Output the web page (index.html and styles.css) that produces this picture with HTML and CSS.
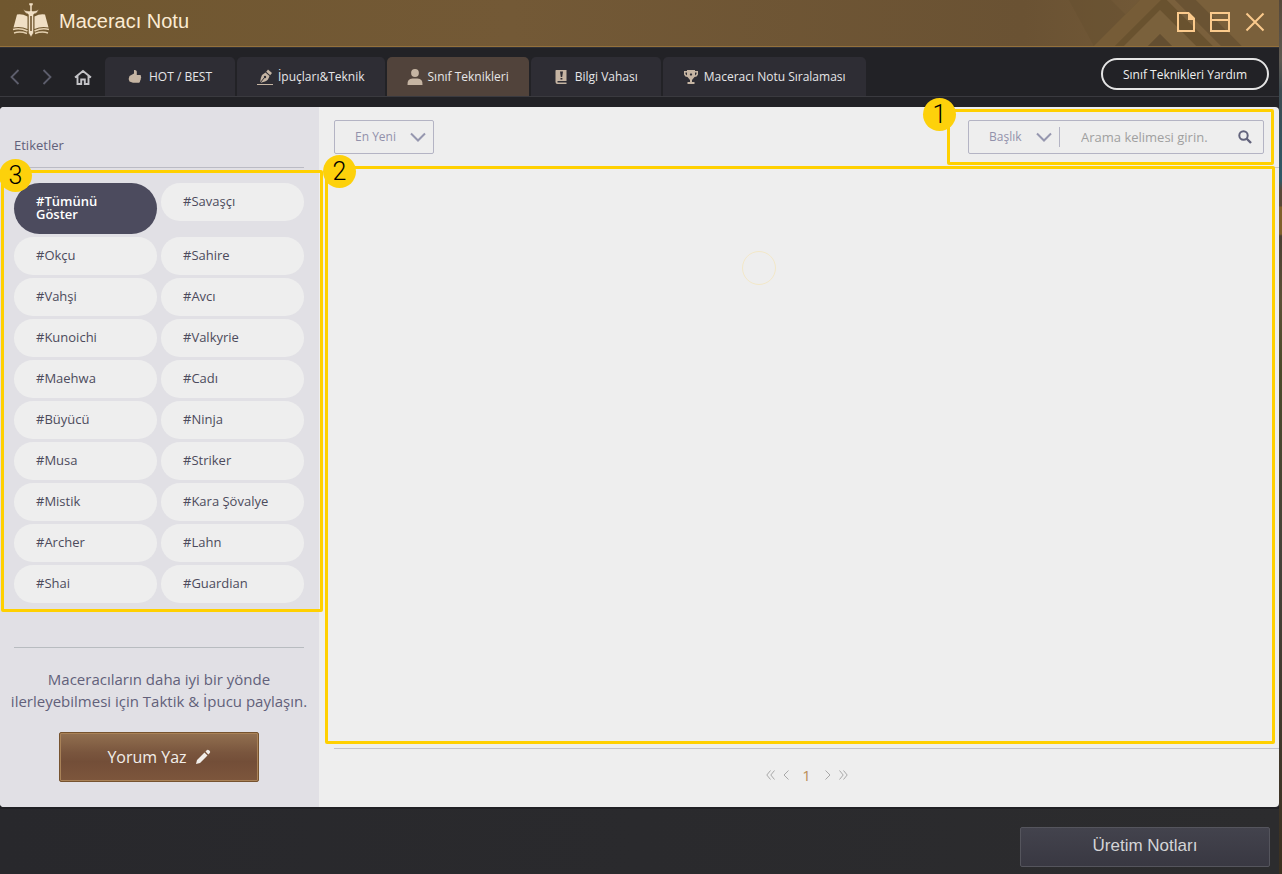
FILE: index.html
```html
<!DOCTYPE html>
<html lang="tr">
<head>
<meta charset="utf-8">
<meta name="viewport" content="width=device-width, initial-scale=1">
<title>Maceracı Notu</title>
<link rel="stylesheet" href="styles.css">
</head>
<body>
<div class="window">
  <header class="titlebar">
    <svg class="titlebar-pattern" width="240" height="46" viewBox="0 0 240 46" aria-hidden="true">
      <path d="M30 0H72L88 16L101 0L55 46z" fill="#65502f" opacity=".5"/>
      <path d="M101 0H122L76 46H55z" fill="#765c37"/>
      <path d="M122 0H128L174 46H157L121 10L85 46H76z" fill="#69522f"/>
      <path d="M121 10L157 46H133L121 34L109 46H85z" fill="#7a613c"/>
      <path d="M121 34L133 46H109z" fill="#634e31"/>
      <path d="M128 0H136L182 46H174z" fill="#7a603c"/>
      <path d="M136 0H157L203 46H182z" fill="#6a5333"/>
      <path d="M157 0H240V46H203z" fill="#7a603b"/>
    </svg>
    <svg class="logo" width="38" height="36" viewBox="0 0 38 36" aria-hidden="true">
      <g fill="#f0dfc5">
        <path d="M5 12.500Q10 11.500 15.500 14.500V27Q9 24 1.500 25.500z"/>
        <path d="M33 12.500Q28 11.500 22.500 14.500V27Q29 24 36.500 25.500z"/>
        <path d="M17 1h4v2.500h-1v5.500h2q2 0 4.500-1.500-1 4-4.500 4.500l-.5 1v18l-2.500 4-2.500-4V13l-.5-1Q13 11.500 11.500 7.500q2.500 1.500 4.500 1.500h2V3.500h-1z" stroke="#71562f" stroke-width=".5"/>
      </g>
      <path d="M19 14v15" stroke="#71562f" stroke-width="1.600" fill="none"/>
      <path d="M1 27.500q7-2 14.500 1.500M2 31q6-2 13 .5M37 27.500q-7-2-14.500 1.500M36 31q-6-2-13 .5" fill="none" stroke="#e4d0b0" stroke-width="1.500"/>
    </svg>
    <h1 class="title">Maceracı Notu</h1>
    <div class="window-controls">
      <button type="button" aria-label="Yeni not">
        <svg width="18" height="20" viewBox="0 0 18 20"><path d="M1 1h10.500L17 6.500V19H1z" fill="none" stroke="#fbca8c" stroke-width="2"/><path d="M11 1v7h7z" fill="#fbca8c"/></svg>
      </button>
      <button type="button" aria-label="Pencere">
        <svg width="20" height="20" viewBox="0 0 20 20"><path d="M1 1h18v18H1zM1 8h18" fill="none" stroke="#fbca8c" stroke-width="2"/></svg>
      </button>
      <button type="button" aria-label="Kapat">
        <svg width="20" height="20" viewBox="0 0 20 20"><path d="M1.500 1.500l17 17M18.500 1.500l-17 17" fill="none" stroke="#fbca8c" stroke-width="2"/></svg>
      </button>
    </div>
  </header>

  <nav class="nav">
    <div class="history">
      <button type="button" aria-label="Geri"><svg width="10" height="16" viewBox="0 0 10 16"><path d="M8.500 1L1.500 8l7 7" fill="none" stroke="#5d5e6c" stroke-width="1.800"/></svg></button>
      <button type="button" aria-label="İleri"><svg width="10" height="16" viewBox="0 0 10 16"><path d="M1.500 1l7 7-7 7" fill="none" stroke="#5d5e6c" stroke-width="1.800"/></svg></button>
      <button type="button" aria-label="Ana sayfa"><svg width="18" height="16" viewBox="0 0 18 16"><path d="M1 8.500L9 2l8 6.500M3.500 7v8h3.700v-4.500h3.600V15h3.700V7" fill="none" stroke="#c3c3c7" stroke-width="1.900"/></svg></button>
    </div>
    <div class="tabs">
      <a class="tab" href="#hot">
        <svg width="16" height="16" viewBox="0 0 16 16"><path d="M1.500 7L6 4.500V1Q8.500.5 8.800 2.500V6h3.500q1.200.5.600 1.800.8 1-.2 2 .4 1.200-.6 2 0 1.800-1.200 2H5L1.500 12.500q-1.500-3 0-5.500z" fill="#c6b5a3"/></svg>
        HOT / BEST</a>
      <a class="tab" href="#tips">
        <svg width="16" height="16" viewBox="0 0 16 16"><path d="M11 .5L15 4l-1.800 2.200L9.200 2.700z" fill="#c6b5a3"/><path d="M8.500 3.500l4 3.500q-1.300 4.500-4.500 5.500L3 14Q3.500 8.500 5 6z" fill="#c6b5a3"/><path d="M3 14l4.500-5.500" stroke="#2e2d34"/><circle cx="8" cy="8" r="1.200" fill="#2e2d34"/><path d="M0 15.500h16" stroke="#c6b5a3"/></svg>
        İpuçları&amp;Teknik</a>
      <a class="tab active" href="#class" aria-current="page">
        <svg width="16" height="16" viewBox="0 0 16 16"><circle cx="8" cy="4" r="3.900" fill="#c6b5a3"/><path d="M.5 16q-.5-6.500 5-6.500h5q5.500 0 5 6.500z" fill="#c6b5a3"/></svg>
        Sınıf Teknikleri</a>
      <a class="tab" href="#oasis">
        <svg width="16" height="16" viewBox="0 0 16 16"><path d="M2 1h10.500v11H3.500v1.500h9V15H3.500Q1.500 15 1.500 13V1.500z" fill="#c6b5a3"/><path d="M6 2.500h3L8.200 8H6.800zM6.500 9h1.900v1.600H6.500z" fill="#2e2d34"/></svg>
        Bilgi Vahası</a>
      <a class="tab" href="#ranking">
        <svg width="16" height="16" viewBox="0 0 16 16"><path d="M4 1h8v1h3v3.500Q14 8 11.500 8L9 11v2h2.500v2h-7v-2H7v-2L4.500 8Q2 8 1 5.500V2h3zM2.500 3.500V5L4 6.500v-3zM13.500 3.500H12v3L13.500 5zM6.700 5.500L8 7l1.300-1.500L8 4z" fill="#c6b5a3" fill-rule="evenodd"/></svg>
        Maceracı Notu Sıralaması</a>
    </div>
    <button type="button" class="help">Sınıf Teknikleri Yardım</button>
  </nav>

  <main class="main">
    <aside class="sidebar">
      <h2 class="sidebar-title">Etiketler</h2>
      <div class="tags">
        <button type="button" class="tag selected">#Tümünü Göster</button>
        <button type="button" class="tag">#Savaşçı</button>
        <button type="button" class="tag">#Okçu</button>
        <button type="button" class="tag">#Sahire</button>
        <button type="button" class="tag">#Vahşi</button>
        <button type="button" class="tag">#Avcı</button>
        <button type="button" class="tag">#Kunoichi</button>
        <button type="button" class="tag">#Valkyrie</button>
        <button type="button" class="tag">#Maehwa</button>
        <button type="button" class="tag">#Cadı</button>
        <button type="button" class="tag">#Büyücü</button>
        <button type="button" class="tag">#Ninja</button>
        <button type="button" class="tag">#Musa</button>
        <button type="button" class="tag">#Striker</button>
        <button type="button" class="tag">#Mistik</button>
        <button type="button" class="tag">#Kara Şövalye</button>
        <button type="button" class="tag">#Archer</button>
        <button type="button" class="tag">#Lahn</button>
        <button type="button" class="tag">#Shai</button>
        <button type="button" class="tag">#Guardian</button>
        <div class="callout callout-tags"><span class="badge">3</span></div>
      </div>
      <div class="share">
        <p>Maceracıların daha iyi bir yönde<br>ilerleyebilmesi için Taktik &amp; İpucu paylaşın.</p>
        <button type="button" class="write">Yorum Yaz
          <svg width="16" height="16" viewBox="0 0 16 16" aria-hidden="true"><path d="M1 15l1-4L9.500 3.500l3 3L5 14zM10.500 2.500L12 1q1-.6 2 .3l.8.8q.8.900 0 1.900l-1.500 1.500z" fill="#f2eeea"/></svg>
        </button>
      </div>
    </aside>

    <section class="content">
      <div class="toolbar">
        <div class="select sort">
          <select aria-label="Sıralama"><option>En Yeni</option></select>
          <svg class="chevron" width="16" height="10" viewBox="0 0 16 10" aria-hidden="true"><path d="M1 1.500l7 7 7-7" fill="none" stroke="#9697af" stroke-width="2"/></svg>
        </div>
        <form class="search">
          <div class="select field">
            <select aria-label="Arama alanı"><option>Başlık</option></select>
            <svg class="chevron" width="16" height="10" viewBox="0 0 16 10" aria-hidden="true"><path d="M1 1.500l7 7 7-7" fill="none" stroke="#9697af" stroke-width="2"/></svg>
          </div>
          <input type="text" aria-label="Arama" placeholder="Arama kelimesi girin.">
          <button type="button" aria-label="Ara"><svg width="14" height="14" viewBox="0 0 14 14"><circle cx="5.500" cy="5.500" r="4.200" fill="none" stroke="#62637c" stroke-width="2"/><path d="M8.500 8.500l4.500 4.500" stroke="#62637c" stroke-width="2.400"/></svg></button>
          <div class="callout callout-search"><span class="badge">1</span></div>
        </form>
      </div>
      <div class="posts">
        <div class="spinner" role="status" aria-label="Yükleniyor"></div>
        <div class="callout callout-posts"><span class="badge">2</span></div>
      </div>
      <div class="pagination">
        <button type="button" aria-label="İlk sayfa"><svg width="9" height="10" viewBox="0 0 9 10"><path d="M4.500 .5L.8 5l3.700 4.500M8.500 .5L4.800 5l3.700 4.500"/></svg></button>
        <button type="button" aria-label="Önceki sayfa"><svg width="6" height="10" viewBox="0 0 6 10"><path d="M5.500 .5L1 5l4.500 4.500"/></svg></button>
        <button type="button" class="page" aria-current="page">1</button>
        <button type="button" aria-label="Sonraki sayfa"><svg width="6" height="10" viewBox="0 0 6 10"><path d="M.5 .5L5 5 .5 9.500"/></svg></button>
        <button type="button" aria-label="Son sayfa"><svg width="9" height="10" viewBox="0 0 9 10"><path d="M.5 .5L4.200 5 .5 9.500M4.500 .5L8.200 5 4.500 9.500"/></svg></button>
      </div>
    </section>
  </main>

  <footer class="footer">
    <button type="button" class="notes">Üretim Notları</button>
  </footer>
</div>
</body>
</html>
```

FILE: styles.css
```css
* { box-sizing: border-box; }

body {
  margin: 0;
  padding-right: 3px;
  font-family: "Open Sans", "Noto Sans", sans-serif;
  font-size: 13px;
  background: linear-gradient(#55483a 0, #5d5850 60px, #3c4a50 90px, #2e5968 180px, #594838 190px, #594838 206px, #80602a 207px, #80602a 234px, #4a4033 236px, #5c5036 300px, #4b4a2a 370px, #45423a 560px, #3b3020 874px);
}

button, input, select { font: inherit; color: inherit; }

button {
  padding: 0;
  border: 0;
  background: none;
  cursor: pointer;
}

svg { display: block; flex: none; }

.window {
  display: flex;
  flex-direction: column;
  min-height: 100vh;
  background: #222226;
}

/* Title bar */
.titlebar {
  position: relative;
  display: flex;
  align-items: center;
  gap: 9px;
  height: 47px;
  padding: 0 14px 2px 12px;
  background: linear-gradient(90deg, #70572f, #735936 40%, #6a5233 80%, #7a603b);
  border-bottom: 1px solid #94713c;
}

.titlebar-pattern {
  position: absolute;
  top: 0;
  right: 0;
}

.logo { margin-bottom: 4px; }

.title {
  margin: 0;
  padding-bottom: 3px;
  font-family: "Liberation Sans", Arial, sans-serif;
  font-size: 20px;
  font-weight: 400;
  line-height: 24px;
  color: #fcebd2;
}

.window-controls {
  position: relative;
  display: flex;
  align-items: center;
  gap: 15px;
  margin-left: auto;
}

/* Navigation */
.nav {
  display: flex;
  align-items: flex-end;
  height: 50px;
  padding-right: 10px;
  border-top: 1px solid #303036;
  border-bottom: 1px solid #3a3a3f;
  flex: none;
}

.history {
  display: flex;
  align-items: center;
  gap: 22px;
  width: 105px;
  height: 39px;
  padding-left: 10px;
}

.tabs {
  display: flex;
  gap: 2px;
}

.tab {
  display: flex;
  align-items: center;
  justify-content: center;
  gap: 5px;
  min-width: 130px;
  height: 39px;
  padding: 0 20px;
  border-radius: 5px 5px 0 0;
  background: #2e2d34;
  color: #e6e6e8;
  font-size: 12px;
  font-weight: 500;
  text-decoration: none;
  white-space: nowrap;
}

.tab.active { background: #51433b; }

.help {
  height: 32px;
  margin: 0 0 6px auto;
  padding: 0 20px;
  border: 2px solid #e4e4e4;
  border-radius: 16px;
  color: #efefef;
  font-size: 12px;
  font-weight: 500;
}

/* Main panel */
.main {
  display: flex;
  flex: 1;
  margin-top: 10px;
  border-radius: 4px;
  background: #eee;
}

.sidebar {
  width: 319px;
  padding: 0 15px 25px 14px;
  border-radius: 4px 0 0 4px;
  background: #e1e0e5;
}

.sidebar-title {
  margin: 0 0 15px;
  padding: 28px 0 12px;
  border-bottom: 1px solid #bbbbc4;
  color: #62607a;
  font-size: 13px;
  font-weight: 400;
  line-height: 20px;
}

.tags {
  position: relative;
  display: grid;
  grid-template-columns: 1fr 1fr;
  align-items: start;
  gap: 3px 4px;
}

.tag {
  padding: 12px 22px 13px;
  border-radius: 26px;
  background: #eee;
  color: #4c4b5c;
  line-height: 13px;
  text-align: left;
}

.tag.selected {
  background: #4c4b5e;
  color: #fff;
  font-weight: 600;
}

.share {
  margin-top: 44px;
  padding-top: 20px;
  border-top: 1px solid #b8bcc0;
  text-align: center;
}

.share p {
  margin: 0 -10px 20px;
  color: #62607a;
  font-size: 15px;
  line-height: 22px;
}

.write {
  display: inline-flex;
  align-items: center;
  justify-content: center;
  gap: 8px;
  width: 200px;
  height: 50px;
  border: 1px solid #76532f;
  border-radius: 2px;
  background: linear-gradient(#927050, #7a563e 40%, #734e38 60%, #7d563c);
  box-shadow: inset 0 0 0 1px #a98258;
  color: #f2eeea;
  font-size: 16px;
  font-weight: 500;
}

/* Content */
.content {
  display: flex;
  flex: 1;
  flex-direction: column;
  min-width: 0;
  padding-left: 15px;
}

.toolbar {
  display: flex;
  justify-content: space-between;
  padding: 13px 15px 13px 0;
  border-bottom: 1px solid #c6c6ce;
}

.select {
  position: relative;
  color: #9291ab;
}

.select select {
  width: 100%;
  height: 100%;
  padding: 0 32px 2px 20px;
  border: 0;
  outline: 0;
  background: none;
  appearance: none;
  font-size: 12px;
}

.chevron {
  position: absolute;
  top: 11px;
  right: 7px;
  pointer-events: none;
}

.sort {
  width: 100px;
  height: 34px;
  border: 1px solid #b4b4c4;
  border-radius: 2px;
}

.search {
  position: relative;
  display: flex;
  align-items: center;
  width: 296px;
  height: 34px;
  padding-right: 11px;
  border: 1px solid #b4b4c4;
  border-radius: 2px;
}

.field {
  width: 91px;
  height: 20px;
  border-right: 1px solid #b4b4c4;
}

.field .chevron { top: 5px; }

.search input {
  flex: 1;
  min-width: 0;
  padding: 0 0 0 21px;
  border: 0;
  outline: 0;
  background: none;
}

.search input::placeholder { color: #a0a0a0; }

.posts {
  position: relative;
  display: flex;
  flex: 1;
  align-items: flex-start;
  justify-content: center;
  padding: 83px 95px 0 0;
}

.spinner {
  width: 34px;
  height: 34px;
  border: 1px solid #f3e8c8;
  border-radius: 50%;
}

.pagination {
  display: flex;
  align-items: center;
  justify-content: center;
  gap: 8px;
  height: 59px;
  padding-bottom: 6px;
  border-top: 1px solid #c3c3cb;
}

.pagination path {
  fill: none;
  stroke: #a8a8a8;
}

.page {
  width: 20px;
  color: #b98d56;
  font-size: 15px;
  font-weight: 500;
}

/* Numbered callouts */
.callout {
  position: absolute;
  border: 3px solid #ffd000;
  border-radius: 2px;
  pointer-events: none;
}

.callout-search { inset: -12px -11px; left: -22px; }
.callout-posts { inset: -2px 4px 4px -9px; }
.callout-tags { inset: -13px -19px -9px -13px; }

.badge {
  position: absolute;
  top: -14px;
  left: -5px;
  width: 33px;
  height: 33px;
  border-radius: 50%;
  background: #fdd10b;
  color: #000;
  font-family: Roboto, sans-serif;
  font-size: 25px;
  font-weight: 300;
  line-height: 33px;
  text-align: center;
}

.callout-search .badge { left: -27px; }

/* Footer */
.footer {
  display: flex;
  justify-content: flex-end;
  padding: 20px 9px 7px;
  background: linear-gradient(90deg, #28282c, #2c2c2e);
  box-shadow: inset 0 2px #202024;
}

.notes {
  width: 250px;
  height: 40px;
  padding-bottom: 3px;
  border: 1px solid #55555d;
  border-radius: 2px;
  background: linear-gradient(#43434d, #393842);
  color: #d4d4d6;
  font-family: "Liberation Sans", Arial, sans-serif;
  font-size: 17px;
}
```
